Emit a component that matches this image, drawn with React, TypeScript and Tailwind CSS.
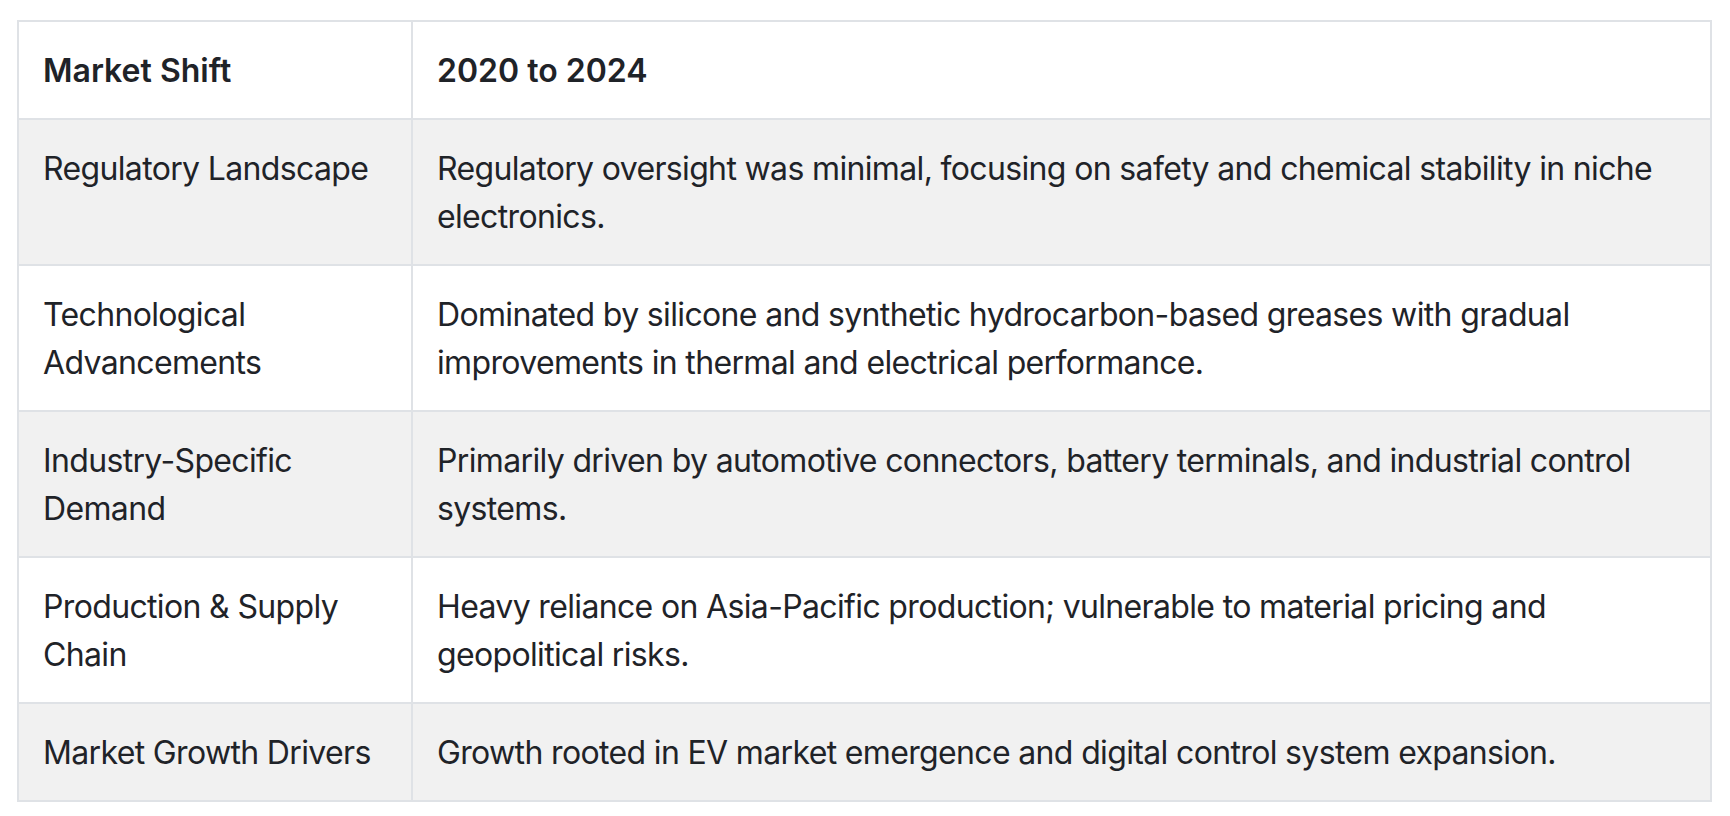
const rows: [string, string][] = [
	[
		"Regulatory Landscape",
		"Regulatory oversight was minimal, focusing on safety and chemical stability in niche electronics.",
	],
	[
		"Technological Advancements",
		"Dominated by silicone and synthetic hydrocarbon-based greases with gradual improvements in thermal and electrical performance.",
	],
	[
		"Industry-Specific Demand",
		"Primarily driven by automotive connectors, battery terminals, and industrial control systems.",
	],
	[
		"Production & Supply Chain",
		"Heavy reliance on Asia-Pacific production; vulnerable to material pricing and geopolitical risks.",
	],
	[
		"Market Growth Drivers",
		"Growth rooted in EV market emergence and digital control system expansion.",
	],
];

export default function App() {
	return (
		<div
			className="min-h-screen bg-white pl-[17px] pt-[20px] text-[#1f2328]"
			style={{ fontFamily: "Inter, 'Noto Sans', sans-serif" }}
		>
			<table className="w-[1695px] table-fixed border-collapse text-[32px] leading-[48px]">
				<colgroup>
					<col className="w-[394px]" />
					<col />
				</colgroup>
				<thead>
					<tr className="bg-white">
						<th className="border-2 border-[#dfe2e6] px-[24px] pt-[25px] pb-[23px] text-left font-semibold">
							Market Shift
						</th>
						<th className="border-2 border-[#dfe2e6] px-[24px] pt-[25px] pb-[23px] text-left font-semibold">
							2020 to 2024
						</th>
					</tr>
				</thead>
				<tbody className="tracking-[-0.65px]">
					{rows.map(([shift, detail], i) => (
						<tr key={shift} className={i % 2 === 0 ? "bg-[#f1f1f1]" : "bg-white"}>
							{/* first column */}
							<td className="border-2 border-[#dfe2e6] px-[24px] pt-[25px] pb-[23px] align-top">
								{shift}
							</td>
							<td className="border-2 border-[#dfe2e6] px-[24px] pt-[25px] pb-[23px] align-top">
								{detail}
							</td>
						</tr>
					))}
				</tbody>
			</table>
		</div>
	);
}
